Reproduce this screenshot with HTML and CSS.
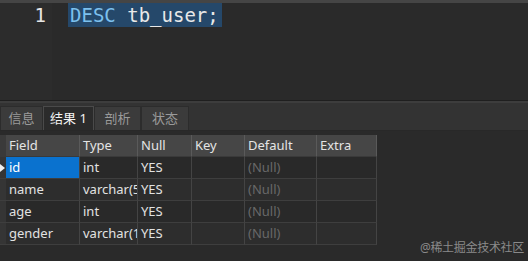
FILE: index.html
```html
<!DOCTYPE html>
<html lang="zh-CN">
<head>
    <meta charset="UTF-8">
    <title>DESC tb_user</title>
    <link rel="stylesheet" href="styles.css">
</head>
<body>
<div class="topbar"></div>

<div class="editor">
    <div class="gutter"><span class="line-no">1</span></div>
    <div class="code">
        <span class="selection"><span class="kw">DESC</span> tb_user;</span>
    </div>
</div>

<div class="splitter"></div>

<div class="tabbar">
    <div class="tab">信息</div>
    <div class="tab active">结果 1</div>
    <div class="tab">剖析</div>
    <div class="tab">状态</div>
</div>

<div class="result">
    <div class="grid">
        <!-- header -->
        <div class="cell head ind"></div>
        <div class="cell head">Field</div>
        <div class="cell head">Type</div>
        <div class="cell head">Null</div>
        <div class="cell head">Key</div>
        <div class="cell head">Default</div>
        <div class="cell head">Extra</div>

        <div class="cell ind"><span class="cursor"></span></div>
        <div class="cell picked">id</div>
        <div class="cell">int</div>
        <div class="cell">YES</div>
        <div class="cell"></div>
        <div class="cell null">(Null)</div>
        <div class="cell"></div>

        <div class="cell ind alt"></div>
        <div class="cell alt">name</div>
        <div class="cell alt">varchar(50)</div>
        <div class="cell alt">YES</div>
        <div class="cell alt"></div>
        <div class="cell alt null">(Null)</div>
        <div class="cell alt"></div>

        <div class="cell ind"></div>
        <div class="cell">age</div>
        <div class="cell">int</div>
        <div class="cell">YES</div>
        <div class="cell"></div>
        <div class="cell null">(Null)</div>
        <div class="cell"></div>

        <div class="cell ind alt"></div>
        <div class="cell alt">gender</div>
        <div class="cell alt">varchar(10)</div>
        <div class="cell alt">YES</div>
        <div class="cell alt"></div>
        <div class="cell alt null">(Null)</div>
        <div class="cell alt"></div>
    </div>
</div>

<div class="watermark">@稀土掘金技术社区</div>
</body>
</html>
```

FILE: styles.css
```css
/* Reset */
* {
    margin: 0;
    padding: 0;
    box-sizing: border-box;
}

body {
    width: 528px;
    height: 261px;
    background-color: #2a2a2a;
    font-family: "Noto Sans", "Noto Sans CJK SC", sans-serif;
    color: #dcdcdc;
    overflow: hidden;
    position: relative;
}

.topbar {
    height: 3px;
    background-color: #454545;
}

/* Query editor */
.editor {
    display: flex;
    height: 97px;
    background-color: #2a2a2a;
}

.gutter {
    width: 52px;
    background-color: #2c2c2c;
    text-align: right;
    padding-right: 6px;
}

.line-no,
.code {
    font-family: "DejaVu Sans Mono", "Liberation Mono", monospace;
    font-size: 19px;
    line-height: 24px;
}

.line-no {
    color: #e6e6e6;
}

.code {
    padding-left: 16px;
    color: #e8e8e8;
}

.selection {
    display: inline-block;
    background-color: #25486a;
    padding: 0 3px 0 2px;
}

.kw {
    color: #7cc0ee;
}

.splitter {
    height: 3px;
    border-top: 1px solid #1f1f1f;
    background-color: #3d3d3d;
}

/* Result tabs */
.tabbar {
    display: flex;
    height: 28px;
    padding-top: 3px;
    background-color: #333333;
    border-bottom: 1px solid #282828;
}

.tab {
    height: 24px;
    font-size: 13px;
    line-height: 23px;
    text-align: center;
    white-space: nowrap;
    color: #9a9a9a;
    background-color: #3b3b3b;
    border: 1px solid #2c2c2c;
    border-bottom: none;
}

.tab:first-child {
    width: 43px;
}

.tab:nth-child(2) {
    width: 51px;
}

.tab:nth-child(3) {
    width: 47px;
}

.tab:nth-child(4) {
    width: 48px;
}

.tab.active {
    color: #f2f2f2;
    background-color: #2b2b2b;
    border-color: #4a4a4a;
}

/* Result grid */
.result {
    padding-top: 4px;
}

.grid {
    display: grid;
    grid-template-columns: 6px 74px 58px 54px 53px 72px 60px;
    grid-auto-rows: 22px;
    width: 377px;
}

.cell {
    font-size: 13px;
    line-height: 21px;
    padding-left: 3px;
    white-space: nowrap;
    overflow: hidden;
    color: #e2e2e2;
    background-color: #292929;
    border-right: 1px solid #444444;
    border-bottom: 1px solid #3e3e3e;
}

.cell.alt {
    background-color: #2d2d2d;
}

.cell.head {
    background-color: #464646;
    color: #e4e4e4;
    border-right-color: #5a5a5a;
    border-bottom-color: #3a3a3a;
}

.cell.ind {
    padding: 0;
    background-color: #353535;
    border-right: none;
    position: relative;
}

.cell.head.ind {
    background-color: #3a3a3a;
}

.cursor {
    position: absolute;
    left: 0;
    top: 7px;
    border-left: 5px solid #f0f0f0;
    border-top: 4px solid transparent;
    border-bottom: 4px solid transparent;
}

.cell.picked {
    background-color: #0a72cf;
    color: #ffffff;
}

.cell.null {
    color: #686868;
}

.watermark {
    position: absolute;
    right: 4px;
    bottom: 5px;
    font-size: 12px;
    color: #8a8a8a;
    letter-spacing: -0.3px;
}
```
